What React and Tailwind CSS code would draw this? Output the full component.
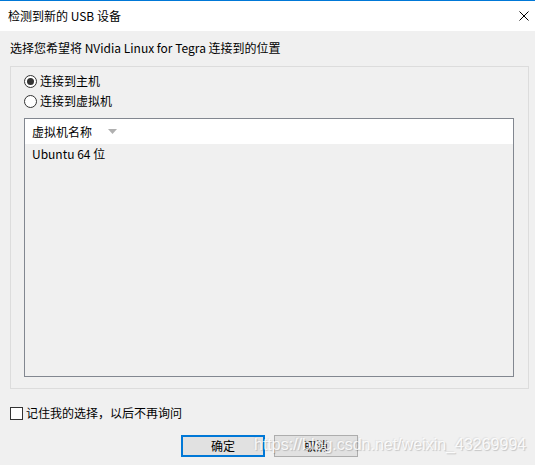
import React from 'react';

const font = { fontFamily: '"Microsoft YaHei UI", "Noto Sans CJK SC", sans-serif' };

const Radio = ({ checked, label }) => (
  <label className="flex items-center h-4">
    <span className="w-[13px] h-[13px] rounded-full border border-[#333333] bg-white flex items-center justify-center">
      {checked && <span className="w-[7px] h-[7px] rounded-full bg-[#333333]" />}
    </span>
    <span className="ml-[3px]">{label}</span>
  </label>
);

const App = () => {
  return (
    <div
      className="relative w-[535px] h-[465px] overflow-hidden bg-[#f0f0f0] text-[12px] leading-4 text-black"
      style={font}
    >
      {/* Title bar */}
      <div className="h-[31px] bg-white border-t border-[#0078d7] flex items-center justify-between pl-2 pr-[6px]">
        <span>检测到新的 USB 设备</span>
        <svg width="10" height="10" viewBox="0 0 10 10">
          <path d="M0.5 0.5 L9.5 9.5 M9.5 0.5 L0.5 9.5" stroke="#000" strokeWidth="1" fill="none" />
        </svg>
      </div>

      <p className="pl-[10px] mt-[9px]">选择您希望将 NVidia Linux for Tegra 连接到的位置</p>

      {/* Group box */}
      <div className="ml-[10px] mt-[10px] w-[519px] h-[323px] border border-[#dcdcdc] pl-[13px] pr-[14px] pt-[6px]">
        <div className="flex flex-col gap-1">
          <Radio checked label="连接到主机" />
          <Radio label="连接到虚拟机" />
        </div>

        {/* VM list */}
        <div className="mt-[9px] h-[259px] border border-[#828790] bg-[#f0f0f0]">
          <div className="h-[25px] bg-white flex items-center pl-[7px]">
            <span>虚拟机名称</span>
            <svg width="9" height="5" viewBox="0 0 9 5" className="ml-[16px]">
              <path d="M0 0 H9 L4.5 5 Z" fill="#b0b0b0" />
            </svg>
          </div>
          <div className="h-5 flex items-center pl-[7px]">Ubuntu 64 位</div>
        </div>
      </div>

      {/* Remember choice */}
      <label className="flex items-center h-4 ml-[10px] mt-[16px]">
        <span className="w-[13px] h-[13px] border border-[#333333] bg-white" />
        <span className="ml-[3px]">记住我的选择，以后不再询问</span>
      </label>

      {/* Buttons */}
      <div className="flex gap-[9px] pl-[181px] mt-[14px]">
        <button className="w-[84px] h-[22px] border-2 border-[#0078d7] bg-[#e1e1e1] flex items-center justify-center">
          确定
        </button>
        <button className="w-[84px] h-[22px] border border-[#adadad] bg-[#e1e1e1] flex items-center justify-center">
          取消
        </button>
      </div>

      {/* Watermark */}
      <span
        className="absolute left-[254px] top-[437px] text-[16px] leading-none text-white/85 pointer-events-none"
        style={{
          fontFamily: '"Liberation Sans", Arial, sans-serif',
          textShadow: '1px 1px 1px rgba(0,0,0,0.18), -1px -1px 1px rgba(0,0,0,0.06)',
        }}
      >
        https://blog.csdn.net/weixin_43269994
      </span>
    </div>
  );
};

export default App;
